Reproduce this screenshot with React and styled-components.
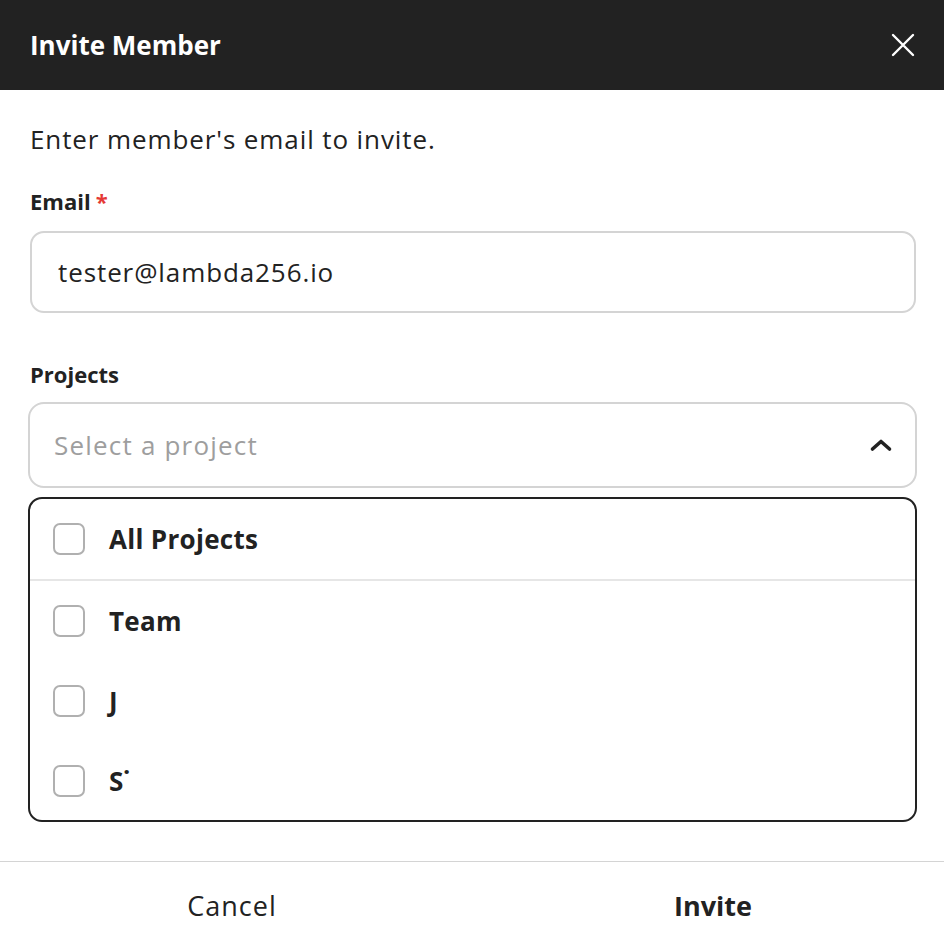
import React from "react";
import styled, { createGlobalStyle } from "styled-components";

const GlobalStyle = createGlobalStyle`
  body {
    margin: 0;
    background: #fff;
    font-family: "Open Sans", Lato, sans-serif;
    color: #222;
  }
`;

//Styles
const Modal = styled.div`
  width: 944px;
  height: 950px;
  display: flex;
  flex-direction: column;
  background: #fff;
`;

const Header = styled.div`
  height: 90px;
  flex-shrink: 0;
  display: flex;
  align-items: center;
  justify-content: space-between;
  padding: 0 27px 0 30px;
  background: #222;
  color: #fff;
`;

const Title = styled.h1`
  margin: 0;
  font-size: 26px;
  font-weight: 700;
`;

const CloseButton = styled.button`
  display: flex;
  background: transparent;
  border: none;
  padding: 0;
  cursor: pointer;
`;

const Body = styled.div`
  flex: 1;
  display: flex;
  flex-direction: column;
  padding: 34px 27px 0 28px;
`;

const Intro = styled.p`
  margin: 0 0 0 2px;
  font-size: 26px;
  line-height: 30px;
  letter-spacing: 0.9px;
`;

const Label = styled.label`
  display: block;
  margin: ${({ $top }) => $top}px 0 0 2px;
  font-size: 22px;
  line-height: 24px;
  font-weight: 700;
`;

const Required = styled.span`
  color: #e53935;
  margin-left: 5px;
`;

const Input = styled.input`
  box-sizing: border-box;
  width: calc(100% - 3px);
  height: 82px;
  margin: 18px 0 0 2px;
  padding: 0 26px;
  border: 2px solid #d4d4d4;
  border-radius: 14px;
  font-family: inherit;
  font-size: 26px;
  letter-spacing: 0.9px;
  color: #222;
  outline: none;
`;

const Select = styled.div`
  box-sizing: border-box;
  height: 86px;
  margin-top: 16px;
  display: flex;
  align-items: center;
  justify-content: space-between;
  padding: 0 22px 0 24px;
  border: 2px solid #d4d4d4;
  border-radius: 16px;
`;

const Placeholder = styled.span`
  font-size: 26px;
  letter-spacing: 1.2px;
  color: #9e9e9e;
`;

const Dropdown = styled.div`
  box-sizing: border-box;
  height: 325px;
  margin-top: 9px;
  border: 2px solid #222;
  border-radius: 14px;
  overflow: hidden;
`;

const Option = styled.div`
  height: 80px;
  display: flex;
  align-items: center;
  gap: 24px;
  padding-left: 23px;
  border-bottom: ${({ $divider }) => ($divider ? "2px solid #e6e6e6" : "none")};
  font-size: 26px;
  letter-spacing: 0.3px;
  font-weight: 700;
`;

const Checkbox = styled.span`
  box-sizing: border-box;
  width: 32px;
  height: 32px;
  border: 2px solid #b0b0b0;
  border-radius: 7px;
  flex-shrink: 0;
`;

const Footer = styled.div`
  height: 88px;
  flex-shrink: 0;
  display: grid;
  grid-template-columns: 1fr 1fr;
  border-top: 1px solid #d4d4d4;
`;

const FooterButton = styled.button`
  background: transparent;
  border: none;
  font-family: inherit;
  font-size: 27px;
  letter-spacing: ${({ $primary }) => ($primary ? "0" : "1px")};
  color: #222;
  font-weight: ${({ $primary }) => ($primary ? 700 : 400)};
  padding: 0 ${({ $primary }) => ($primary ? "0" : "8px")} 2px
    ${({ $primary }) => ($primary ? "10px" : "0")};
  cursor: pointer;
`;

const projects = [
  { name: "All Projects", divider: true },
  { name: "Team" },
  { name: "J" },
  { name: "S\u02D9" },
];

export default function App() {
  return (
    <>
      <GlobalStyle />
      <Modal>
        <Header>
          <Title>Invite Member</Title>
          <CloseButton aria-label="Close">
            <svg width="28" height="28" viewBox="0 0 28 28">
              <path
                d="M4 4 L24 24 M24 4 L4 24"
                stroke="#fff"
                strokeWidth="2.4"
                strokeLinecap="round"
              />
            </svg>
          </CloseButton>
        </Header>
        <Body>
          <Intro>Enter member's email to invite.</Intro>
          <Label $top={35} htmlFor="email">
            Email<Required>*</Required>
          </Label>
          <Input id="email" type="email" defaultValue="tester@lambda256.io" />
          <Label $top={49}>Projects</Label>
          <Select>
            <Placeholder>Select a project</Placeholder>
            <svg width="24" height="24" viewBox="0 0 24 24">
              <path
                d="M3.5 16 L12 8.5 L20.5 16"
                fill="none"
                stroke="#222"
                strokeWidth="3.6"
                strokeLinejoin="round"
                strokeLinecap="round"
              />
            </svg>
          </Select>
          <Dropdown>
            {projects.map((p) => (
              <Option key={p.name} $divider={p.divider}>
                <Checkbox />
                {p.name}
              </Option>
            ))}
          </Dropdown>
        </Body>
        <Footer>
          <FooterButton>Cancel</FooterButton>
          <FooterButton $primary>Invite</FooterButton>
        </Footer>
      </Modal>
    </>
  );
}
